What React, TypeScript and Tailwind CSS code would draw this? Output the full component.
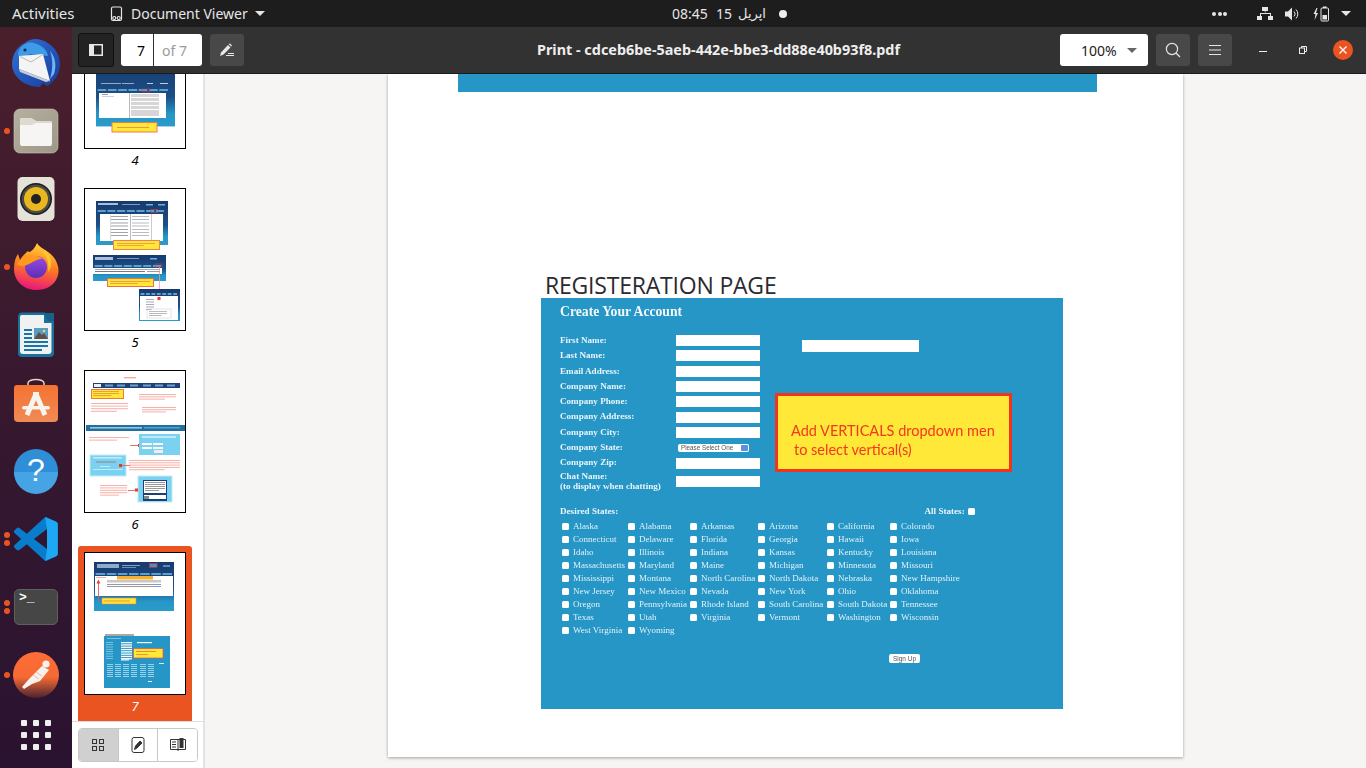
import React from "react";

const serif = "font-['Liberation_Serif',serif]";
const ui = "font-['Noto_Sans','Open_Sans',sans-serif]";

type RectT = [number, number, number, number, string];
const Rects = ({ r }: { r: RectT[] }) => (
  <>
    {r.map((a, i) => (
      <rect key={i} x={a[0]} y={a[1]} width={a[2]} height={a[3]} fill={a[4]} />
    ))}
  </>
);

const Lines = ({ x, y, w, n, gap = 2, color = "#f7b0a8", h = 1 }: { x: number; y: number; w: number; n: number; gap?: number; color?: string; h?: number }) => (
  <>
    {Array.from({ length: n }).map((_, i) => (
      <rect key={i} x={x} y={y + i * gap} width={i === n - 1 ? w * 0.7 : w} height={h} fill={color} />
    ))}
  </>
);

const Grad = ({ id }: { id: string }) => (
  <defs>
    <linearGradient id={id} x1="0" y1="0" x2="0" y2="1">
      <stop offset="0" stopColor="#173a6e" />
      <stop offset="0.55" stopColor="#1c4f86" />
      <stop offset="0.8" stopColor="#2596c6" />
      <stop offset="1" stopColor="#2a9bcb" />
    </linearGradient>
  </defs>
);

const NavStrip = ({ x, y, w }: { x: number; y: number; w: number }) => (
  <>
    {Array.from({ length: 7 }).map((_, i) => (
      <rect key={i} x={x + (i * w) / 7 + 0.6} y={y} width={w / 7 - 1.6} height={2} fill="#5f9fc8" />
    ))}
  </>
);

const svgCls = "block blur-[0.4px]";

const Thumb4 = () => (
  <svg width="102" height="143" viewBox="84 6 102 143" className={svgCls}>
    <Grad id="g4" />
    <rect x="96" y="60" width="79" height="67" fill="url(#g4)" />
    <rect x="96" y="126" width="79" height="1" fill="#9fd3ea" />
    <NavStrip x={97} y={89} w={72} />
    <rect x="101" y="83" width="20" height="1" fill="#9ab" />
    <rect x="122" y="83" width="12" height="1" fill="#9ab" />
    <rect x="147" y="83" width="6" height="1" fill="#b5d0e5" />
    <rect x="160" y="83" width="8" height="1" fill="#b5d0e5" />
    <rect x="99" y="93" width="67" height="25" fill="#ffffff" />
    <Rects r={[[102, 94, 6, 1, "#999"], [102, 96, 12, 1, "#c5d2e8"], [131, 94, 28, 22, "#d6d6d6"], [131, 97, 28, 1, "#fff"], [131, 101, 28, 1, "#fff"], [131, 105, 28, 1, "#fff"], [131, 109, 28, 1, "#fff"], [129, 93, 1, 25, "#bbb"]]} />
    <rect x="142" y="89" width="8" height="3" fill="none" stroke="#c83a3a" strokeWidth="0.6" />
    <rect x="112" y="122.5" width="45" height="9.5" fill="#ffe838" stroke="#f07a50" strokeWidth="1" />
    <rect x="117" y="127" width="32" height="1" fill="#e89a40" />
  </svg>
);

const Thumb5 = () => (
  <svg width="102" height="143" viewBox="84 188 102 143" className={svgCls}>
    <Grad id="g5" />
    <rect x="96" y="201" width="72" height="44" fill="url(#g5)" />
    <Rects r={[[98, 203, 20, 2, "#a9c0da"], [122, 204, 18, 1, "#7f9cc0"], [146, 204, 7, 1.5, "#6fb0da"], [158, 204, 7, 1.5, "#6fb0da"]]} />
    <NavStrip x={97} y={210} w={68} />
    <rect x="100" y="214" width="63" height="27" fill="#fff" />
    <Rects r={[[110, 215, 1, 25, "#ddd"], [130, 214, 1, 26, "#bbb"], [151, 214, 1, 26, "#ccc"]]} />
    {[216, 219, 222.5, 225.5, 229, 232, 235].map((y) => (
      <g key={y}>
        <rect x="111" y={y} width="17" height="1" fill="#a0a4ac" />
        <rect x="132" y={y} width="17" height="1" fill="#b8bcc2" />
      </g>
    ))}
    <rect x="151" y="209.5" width="7" height="3" fill="none" stroke="#d43a3a" strokeWidth="0.6" />
    <rect x="113.5" y="240.5" width="46" height="9" fill="#ffe838" stroke="#f08050" strokeWidth="1" />
    <Lines x={117} y={243} w={38} n={2} color="#f0a040" />
    <rect x="93" y="255" width="73" height="26" fill="url(#g5)" />
    <Rects r={[[95, 257, 18, 3, "#a9c0da"], [117, 258, 22, 1, "#7f9cc0"], [150, 258, 7, 1.5, "#6fb0da"]]} />
    <NavStrip x={94} y={265} w={68} />
    <rect x="93" y="268" width="69" height="6" fill="#fff" />
    <Rects r={[[95, 269, 65, 1, "#aab"], [95, 271, 50, 1, "#777"], [147, 271, 13, 1, "#99a"]]} />
    <rect x="155" y="264" width="7" height="3" fill="none" stroke="#d43a3a" strokeWidth="0.6" />
    <rect x="107.5" y="278.5" width="46" height="8" fill="#ffe838" stroke="#f07040" strokeWidth="1" />
    <Lines x={110} y={281} w={40} n={2} color="#f0a040" />
    <rect x="159" y="267" width="0.8" height="30" fill="#f49a90" />
    <rect x="139" y="289" width="41" height="32" fill="url(#g5)" />
    <rect x="140" y="296" width="38" height="24" fill="#fff" />
    <NavStrip x={140} y={293} w={38} />
    <rect x="157.5" y="297" width="3" height="3" fill="#e33" />
    <Lines x={146} y={299} w={8} n={5} gap={2.5} color="#aab" />
    <rect x="147" y="309" width="24" height="9" fill="none" stroke="#ccc" strokeWidth="0.5" />
    <Lines x={149} y={311} w={18} n={3} color="#bbb" />
  </svg>
);

const Thumb6 = () => (
  <svg width="102" height="143" viewBox="84 370 102 143" className={svgCls}>
    <rect x="124" y="377" width="12" height="1.4" fill="#f7a9a0" />
    <rect x="93" y="383" width="87" height="5" fill="#1e4178" />
    <rect x="94" y="384" width="7" height="3" fill="#f0f0f0" />
    {[105, 117, 130, 143, 155, 167].map((x) => (
      <rect key={x} x={x} y="384.5" width="8" height="2" fill="#6ea0cc" />
    ))}
    <rect x="91.5" y="389.5" width="32" height="9" fill="#ffe838" stroke="#f07a30" strokeWidth="1" />
    <Lines x={93} y={391} w={26} n={3} color="#e8a040" />
    <Lines x={91} y={403} w={37} n={4} gap={2.6} />
    <Lines x={139} y={394} w={37} n={3} gap={2.3} />
    <Lines x={142} y={407} w={34} n={3} gap={2.2} />
    <rect x="86" y="425" width="99" height="6" fill="#1f6fa0" />
    <rect x="90" y="427" width="52" height="1.6" fill="#9cc4dc" />
    <rect x="144" y="427" width="36" height="1.5" fill="#5fa0c8" />
    <Lines x={89} y={437} w={40} n={2} gap={2.6} />
    <rect x="130" y="445" width="9" height="0.9" fill="#f0604f" />
    <rect x="138" y="444" width="2" height="3" fill="#e83a2a" />
    <rect x="139" y="434" width="41" height="21" fill="#7ad2f0" />
    <rect x="142" y="436" width="34" height="2" fill="#bfeafa" />
    <Rects r={[[142, 443, 10, 2, "#fff"], [153, 443, 10, 2, "#fff"], [142, 447, 10, 2, "#fff"], [153, 447, 10, 2, "#fff"], [154, 450, 9, 3, "#eee"]]} />
    <rect x="90" y="455" width="36" height="21" fill="#7ad2f0" stroke="#c4ecfa" strokeWidth="1" />
    <rect x="93" y="457" width="29" height="1.6" fill="#bfeafa" />
    <rect x="96" y="461" width="20" height="2" fill="#8aa8b8" />
    <rect x="100" y="466" width="10" height="1" fill="#bfeafa" />
    <rect x="93" y="469" width="30" height="1" fill="#bfeafa" />
    <rect x="121" y="465" width="10" height="0.9" fill="#f0604f" />
    <rect x="119" y="464" width="3" height="3" fill="#e83a2a" />
    <Lines x={129} y={460} w={51} n={5} gap={2.3} />
    <rect x="138" y="476" width="34" height="26" fill="#7ad2f0" stroke="#c4ecfa" strokeWidth="1" />
    <rect x="143" y="480" width="24" height="21" fill="#1c3f76" />
    <rect x="144" y="481" width="22" height="12" fill="#fff" />
    <Lines x={145} y={482} w={20} n={5} color="#999" />
    <rect x="144" y="495" width="22" height="4" fill="#fff" />
    <rect x="144" y="496" width="5" height="3" fill="#888" />
    <Lines x={100} y={485} w={27} n={5} gap={2.4} />
    <rect x="128" y="490" width="9" height="0.9" fill="#f0604f" />
    <rect x="135" y="488.5" width="3" height="3" fill="#e83a2a" />
  </svg>
);

const Thumb7 = () => (
  <svg width="102" height="143" viewBox="84 552 102 143" className={svgCls}>
    <Grad id="g7" />
    <rect x="94" y="562" width="80" height="49" fill="url(#g7)" />
    <Rects r={[[97, 564, 22, 4, "#8eabcb"], [122, 565, 18, 1, "#86a4c6"], [122, 567, 14, 1, "#6e8fb8"], [150, 564, 7, 3, "#4f8fc0"], [163, 565, 7, 2, "#4f8fc0"]]} />
    <NavStrip x={95} y={573} w={78} />
    <rect x="149.5" y="563.5" width="7.5" height="4" fill="none" stroke="#d43a3a" strokeWidth="0.7" />
    <rect x="95" y="576" width="78" height="20" fill="#fff" />
    <rect x="117" y="576" width="36" height="3.5" fill="#f6b132" />
    <Rects r={[[107, 580, 54, 3, "#c8c8c8"], [107, 584, 54, 1, "#999"], [107, 586, 54, 1, "#999"], [107, 582.5, 54, 0.5, "#fff"], [154, 584, 7, 1, "#7a9ad0"], [154, 586, 7, 1, "#7a9ad0"]]} />
    <rect x="96" y="577" width="10" height="0.8" fill="#f29a8e" />
    <rect x="98" y="583" width="0.9" height="18" fill="#f05a48" />
    <path d="M98.4 579.5 L96.5 583.5 L100.3 583.5 Z" fill="#e8392a" />
    <rect x="102" y="598" width="34" height="6" fill="#ffe838" stroke="#f08040" strokeWidth="0.6" />
    <rect x="104" y="600.5" width="26" height="1" fill="#e09a40" />
    <rect x="105" y="634" width="29" height="2" fill="#a8a8a8" />
    <rect x="104" y="636" width="66" height="52" fill="#2596c6" />
    <rect x="107" y="638" width="14" height="1" fill="#7fc0df" />
    {[642, 644.3, 646.6, 648.9, 651.2, 653.5, 655.8, 658.1].map((y) => (
      <g key={y}>
        <rect x="106" y={y} width="7" height="0.8" fill="#8fcde8" />
        <rect x="121" y={y} width="11" height="1.3" fill="#fff" />
      </g>
    ))}
    <rect x="121" y="659" width="8" height="1.6" fill="#d8e6ee" />
    <rect x="137" y="642" width="15" height="1.2" fill="#fff" />
    <rect x="133.5" y="648.5" width="29.5" height="9.5" fill="#ffe838" stroke="#e05a50" strokeWidth="0.8" />
    <rect x="136" y="651" width="20" height="1" fill="#e09040" />
    <rect x="136" y="654" width="12" height="0.9" fill="#e09040" />
    {[107, 115, 123, 131, 140, 148].map((x) => (
      <g key={x}>
        {[664, 666, 668, 670, 672, 674, 676].map((y) => (
          <rect key={y} x={x} y={y} width="6" height="0.9" fill="#a8d8ee" />
        ))}
      </g>
    ))}
    <rect x="148" y="681" width="4" height="1" fill="#fff" />
    <rect x="159" y="663" width="5" height="1" fill="#d8eef8" />
  </svg>
);

const ThumbItem = ({ n, selected, children }: { n: number; selected?: boolean; children: React.ReactNode }) => (
  <div className={`flex h-[182px] w-[114px] flex-col items-center rounded-[3px] pt-[6px] ${selected ? "bg-[#e95420]" : ""}`}>
    <div className="h-[143px] w-[102px] bg-white outline outline-1 -outline-offset-1 outline-black">{children}</div>
    <div className={`mt-[2px] text-[13px] italic leading-[18px] ${ui} ${selected ? "text-white" : "text-black"}`}>{n}</div>
  </div>
);

/* Dock icons */
const Thunderbird = () => (
  <svg width="52" height="52" viewBox="0 0 52 52">
    <defs>
      <linearGradient id="tb" x1="0" y1="0" x2="1" y2="1">
        <stop offset="0" stopColor="#2f74d8" />
        <stop offset="1" stopColor="#1a3a9c" />
      </linearGradient>
    </defs>
    <path d="M26 2 C38 3 50 13 50 27 C50 38 43 46 37 49 L33 46 L30 50 C14 50 2 39 2 27 C2 17 8 9 15 6 C18 3 22 2 26 2Z" fill="url(#tb)" />
    <path d="M8 17 C9 10 16 4 24 6 C32 8 37 13 38 19 L20 17 L10 23 Z" fill="#3f9be6" />
    <path d="M40 14 C45 20 47 28 44 37 L40 42 C43 32 43 22 40 14Z" fill="#6ab8f4" />
    <circle cx="15" cy="13" r="1.6" fill="#102a60" />
    <path d="M9 19 L33 17 L40 44 L9 32Z" fill="#f4f4f4" />
    <path d="M10 19.5 L21 25 L33 17.5" fill="none" stroke="#b8b8b8" strokeWidth="1" />
    <path d="M9 32 L40 44 L36 45 L10 35 Z" fill="#c8ccd6" />
  </svg>
);
const Files = () => (
  <svg width="46" height="46" viewBox="0 0 46 46">
    <defs>
      <linearGradient id="fl" x1="0" y1="0" x2="1" y2="1">
        <stop offset="0" stopColor="#b5b0a0" />
        <stop offset="1" stopColor="#9c9786" />
      </linearGradient>
    </defs>
    <rect x="1" y="1" width="44" height="44" rx="6" fill="url(#fl)" stroke="#c9c5b8" strokeWidth="0.6" />
    <path d="M7 12 a2 2 0 0 1 2 -2 h9 l5 3 h14 a2 2 0 0 1 2 2 v21 a2 2 0 0 1 -2 2 h-28 a2 2 0 0 1 -2 -2 Z" fill="#f6f5f3" />
    <path d="M7 12 a2 2 0 0 1 2 -2 h9 l5 3 h14 a2 2 0 0 1 2 2 v0 h-16 l-4 2 h-12 Z" fill="#dedad0" />
  </svg>
);
const Rhythmbox = () => (
  <svg width="46" height="46" viewBox="0 0 46 46">
    <rect x="4.5" y="1" width="37" height="44" rx="5" fill="#e5e2d8" />
    <circle cx="23" cy="23" r="16" fill="#1c1c1c" />
    <circle cx="23" cy="23" r="14.5" fill="#4a4a48" />
    <circle cx="23" cy="23" r="12" fill="#e8b81e" />
    <circle cx="23" cy="23" r="5" fill="#222" />
  </svg>
);
const Firefox = () => (
  <svg width="48" height="50" viewBox="0 0 48 50">
    <defs>
      <linearGradient id="ff" x1="0.6" y1="0" x2="0.4" y2="1">
        <stop offset="0" stopColor="#ffd43a" />
        <stop offset="0.5" stopColor="#ff7a20" />
        <stop offset="1" stopColor="#e8147e" />
      </linearGradient>
      <linearGradient id="ffp" x1="0" y1="0" x2="0" y2="1">
        <stop offset="0" stopColor="#9a4be0" />
        <stop offset="1" stopColor="#5b2fb8" />
      </linearGradient>
    </defs>
    <path d="M25 1 C28 7 37 8 43 17 C47 24 48 31 44 38 C40 45 32 48 24 48 C12 48 2 39 2 27 C2 21 3 16 6 12 L8 18 C10 14 13 12 16 9 C17 12 22 8 25 1Z" fill="url(#ff)" />
    <circle cx="24" cy="25" r="11" fill="url(#ffp)" />
    <path d="M5 22 C11 13 23 11 31 17 C27 16 23 19 19 21 C15 23 9 26 5 22Z" fill="#ff9a1e" />
    <path d="M33 8 C40 14 41 24 36 30 C37 22 36 15 30 10Z" fill="#ffc52e" />
  </svg>
);
const Writer = () => (
  <svg width="46" height="46" viewBox="0 0 46 46">
    <path d="M8 0.5 H32 L41 9 V41 a4 4 0 0 1 -4 4 H9 a4 4 0 0 1 -4 -4 V4 a4 4 0 0 1 3 -3.5Z" fill="#18729c" />
    <path d="M9 3 H31 V11 H38.5 V39 a3 3 0 0 1 -3 3 H10 a3 3 0 0 1 -3 -3 V5 a2 2 0 0 1 2 -2Z" fill="#f0f2f2" />
    <path d="M31 1 L41 1 L41 9 L35 9Z" fill="#15628a" />
    <rect x="11" y="17" width="8" height="2" fill="#1a76a8" />
    <rect x="11" y="21" width="8" height="2" fill="#1a76a8" />
    <rect x="11" y="25" width="8" height="2" fill="#1a76a8" />
    <rect x="11" y="29" width="24" height="2" fill="#1a76a8" />
    <rect x="11" y="33" width="24" height="2" fill="#1a76a8" />
    <rect x="11" y="37" width="18" height="2" fill="#1a76a8" />
    <rect x="21" y="16" width="14" height="11" fill="#5a9cc0" />
    <path d="M21 27 L26 20 L29 23 L31 21 L35 27Z" fill="#5c5248" />
    <circle cx="31" cy="19" r="1.3" fill="#f0d070" />
  </svg>
);
const Software = () => (
  <svg width="46" height="46" viewBox="0 1 46 46" className="overflow-visible">
    <defs>
      <linearGradient id="sw" x1="0" y1="0" x2="0" y2="1">
        <stop offset="0" stopColor="#f47332" />
        <stop offset="1" stopColor="#f08a55" />
      </linearGradient>
    </defs>
    <path d="M15 7 V4 a8 3.5 0 0 1 16 0 V7" fill="none" stroke="#e8d4b8" strokeWidth="1.5" />
    <path d="M4 6 H42 a3 3 0 0 1 3 3 V39 a4 4 0 0 1 -4 4 H5 a4 4 0 0 1 -4 -4 V9 a3 3 0 0 1 3 -3Z" fill="url(#sw)" />
    <path d="M23 15 L14 36 M23 15 L32 36" fill="none" stroke="#f7f4ee" strokeWidth="5" />
    <rect x="20" y="13" width="6" height="4" fill="#f7f4ee" />
    <rect x="9" y="27" width="28" height="3.5" rx="1.7" fill="#f7f4ee" />
  </svg>
);
const Help = () => (
  <svg width="46" height="46" viewBox="0 0 46 46">
    <circle cx="23" cy="23" r="22" fill="#2e8ed8" />
    <path d="M1 24 H45 A22 22 0 0 1 1 24Z" fill="#46a4e4" />
    <text x="23" y="33" textAnchor="middle" fontSize="32" fill="#fff" fontFamily="Liberation Sans, sans-serif">?</text>
  </svg>
);
const VSCode = () => (
  <svg width="44" height="44" viewBox="0 0 100 100">
    <path d="M96 10.8 L75.4 .9 a6.2 6.2 0 0 0-7.1 1.2 L29.2 38 12.1 25 a4.2 4.2 0 0 0-5.3.2 L1.4 30.2 a4.2 4.2 0 0 0 0 6.2 L16.2 50 1.4 63.6 a4.2 4.2 0 0 0 0 6.2 l5.5 5 a4.2 4.2 0 0 0 5.3.2 L29.2 62 68.3 97.8 a6.2 6.2 0 0 0 7.1 1.2 L96 89.2 a6.2 6.2 0 0 0 3.5-5.6 V16.4 a6.2 6.2 0 0 0-3.5-5.6Z M75 72.7 45.3 50 75 27.3Z" fill="#0a7ccc" fillRule="evenodd" />
    <path d="M71 0.5 L96 10.8 a6 6 0 0 1 3.5 5.6 V83.6 a6 6 0 0 1 -3.5 5.6 L71 99.5 L75 72.7 V27.3 Z" fill="#1ea7f5" />
  </svg>
);
const Terminal = () => (
  <div className="relative h-[36px] w-[44px] rounded-[5px] border border-[#5f5f5f] bg-[#464646]">
    <span className="absolute left-[4px] top-[1px] font-['Liberation_Mono',monospace] text-[13px] font-bold leading-[14px] text-white">&gt;_</span>
  </div>
);
const Postman = () => (
  <svg width="48" height="48" viewBox="0 0 48 48">
    <defs>
      <linearGradient id="pm" x1="0" y1="0" x2="0" y2="1">
        <stop offset="0" stopColor="#ff6c37" />
        <stop offset="0.55" stopColor="#f56a33" />
        <stop offset="1" stopColor="#4a2330" />
      </linearGradient>
    </defs>
    <circle cx="24" cy="24" r="23" fill="url(#pm)" />
    <circle cx="34" cy="13" r="3.6" fill="#f7f2ee" />
    <path d="M30 15 L37 19 L28 30 L20 33 L12 38 L10 36 L17 28Z" fill="#f7f2ee" />
    <path d="M24 21 L30 25 M21 24 L27 28" stroke="#f0a080" strokeWidth="0.7" />
  </svg>
);

const DockItem = ({ dots = 0, children, h = "h-[68px]" }: { dots?: number; children: React.ReactNode; h?: string }) => (
  <div className={`relative flex w-[72px] items-center justify-center ${h}`}>
    {dots > 0 && (
      <div className="absolute left-[4px] top-0 flex h-full flex-col justify-center gap-[2px]">
        {Array.from({ length: dots }).map((_, i) => (
          <span key={i} className="h-[6px] w-[6px] rounded-full bg-[#e95420]" />
        ))}
      </div>
    )}
    {children}
  </div>
);

const Dock = () => (
  <aside className="flex w-[72px] shrink-0 flex-col bg-gradient-to-b from-[#4a1f2c] via-[#37182f] to-[#2a1330] pt-[2px]">
    <DockItem><Thunderbird /></DockItem>
    <DockItem dots={1}><Files /></DockItem>
    <DockItem><Rhythmbox /></DockItem>
    <DockItem dots={1}><Firefox /></DockItem>
    <DockItem><Writer /></DockItem>
    <DockItem><Software /></DockItem>
    <DockItem><Help /></DockItem>
    <DockItem dots={2}><VSCode /></DockItem>
    <DockItem dots={2}><Terminal /></DockItem>
    <DockItem dots={1}><Postman /></DockItem>
    <div className="ml-[21px] mt-[11px] grid w-[30px] grid-cols-3 gap-[6px]">
      {Array.from({ length: 9 }).map((_, i) => (
        <span key={i} className="h-[6px] w-[6px] rounded-[1px] bg-[#eeeeee]" />
      ))}
    </div>
  </aside>
);

const TopBar = () => (
  <header className={`flex h-[27px] shrink-0 items-center bg-[#1d1d1d] text-[14px] text-[#e6e6e6] ${ui}`}>
    <div className="w-[110px] pl-[12px] text-[15px]">Activities</div>
    <svg width="13" height="16" viewBox="0 0 13 16" fill="none" stroke="#e6e6e6" strokeWidth="1.2">
      <path d="M1.5 13 V2.5 a1.5 1.5 0 0 1 1.5 -1.5 h7 a1.5 1.5 0 0 1 1.5 1.5 V13 a1.5 1.5 0 0 1 -1.5 1.5 h-7 a1.5 1.5 0 0 1 -1.5 -1.5Z" />
      <circle cx="4.3" cy="12" r="1.5" />
      <circle cx="8.7" cy="12" r="1.5" />
    </svg>
    <div className="ml-[8px] w-[124px]">Document Viewer</div>
    <span className="h-0 w-0 border-x-[5px] border-t-[5px] border-x-transparent border-t-[#e6e6e6]" />
    <div className="flex flex-1 items-center pl-[407px]">
      <span className="w-[37px] text-[#e6e6e6]">08:45</span>
      <span className="ml-[7px]">15</span>
      <span className="ml-[6px] font-['DejaVu_Sans','Noto_Sans',sans-serif] text-[13px]" dir="rtl">اپریل</span>
      <span className="ml-[13px] h-[8px] w-[8px] rounded-full bg-[#eeeeee]" />
    </div>
    <div className="flex items-center">
      <span className="flex gap-[1.5px]">
        <i className="h-[4px] w-[4px] rounded-full bg-[#e6e6e6]" />
        <i className="h-[4px] w-[4px] rounded-full bg-[#e6e6e6]" />
        <i className="h-[4px] w-[4px] rounded-full bg-[#e6e6e6]" />
      </span>
      <svg width="16" height="14" viewBox="0 0 16 14" className="ml-[30px]" fill="#e6e6e6">
        <rect x="5" y="0" width="6" height="4" />
        <rect x="0" y="9" width="5" height="4" />
        <rect x="11" y="9" width="5" height="4" />
        <path d="M7.5 4 h1 v2 h5.5 v3 h-1 v-2 h-9 v2 h-1 v-3 h5.5Z" />
      </svg>
      <svg width="15" height="14" viewBox="0 0 15 14" className="ml-[12px]" fill="none" stroke="#e6e6e6">
        <path d="M0 4.5 h3 l4 -4 v13 l-4 -4 h-3Z" fill="#e6e6e6" stroke="none" />
        <path d="M9 4.5 a3.5 3.5 0 0 1 0 5" strokeWidth="1" />
        <path d="M11 2.5 a6.5 6.5 0 0 1 0 9" strokeWidth="1" />
      </svg>
      <svg width="16" height="16" viewBox="0 0 16 16" className="ml-[13px]" fill="none">
        <path d="M3.5 2 L0.5 8 H2.5 L1.5 14 L5 7 H3 L4.5 2Z" fill="#e6e6e6" />
        <rect x="8" y="2" width="7.5" height="13" rx="1" stroke="#e6e6e6" />
        <rect x="10" y="0.5" width="3.5" height="1.5" fill="#e6e6e6" />
        <rect x="9.5" y="9" width="4.5" height="4.5" fill="#e6e6e6" />
      </svg>
      <span className="ml-[12px] mr-[15px] h-0 w-0 border-x-[5px] border-t-[5px] border-x-transparent border-t-[#e6e6e6]" />
    </div>
  </header>
);

const HdrBtn = ({ children, w = "w-[34px]" }: { children: React.ReactNode; w?: string }) => (
  <div className={`flex h-[32px] items-center justify-center rounded-[3px] bg-[#484848] ${w}`}>{children}</div>
);

const Toolbar = () => (
  <div className={`flex h-[47px] shrink-0 items-center border-b border-[#1c1c1c] bg-[#333232] pl-[6px] ${ui}`}>
    <div className="flex h-[34px] w-[36px] items-center justify-center rounded-[3px] border border-[#111] bg-[#232323]">
      <svg width="14" height="12" viewBox="0 0 14 12">
        <path d="M0 0 H14 V12 H0Z M5 1.5 V10.5 H12.5 V1.5Z" fill="#e8e8e8" fillRule="evenodd" />
      </svg>
    </div>
    <div className="ml-[7px] flex h-[32px] w-[81px] items-stretch rounded-[3px] bg-white text-[14px]">
      <div className="flex w-[33px] items-center justify-end border-r border-[#333] pr-[8px] text-black">7</div>
      <div className="flex flex-1 items-center pl-[8px] text-[#9a9a9a]">of 7</div>
    </div>
    <div className="ml-[8px]">
      <HdrBtn>
        <svg width="16" height="14" viewBox="0 0 16 14" fill="#e8e8e8">
          <path d="M1 13 L2 9.5 L9 2 L11.5 4.5 L4.5 11.5Z" />
          <path d="M9.8 1.3 L10.8 0.3 L13 2.5 L12.2 3.6Z" />
          <rect x="7" y="12" width="8" height="1" />
          <rect x="9" y="10" width="6" height="1" />
        </svg>
      </HdrBtn>
    </div>
    <div className="ml-[293px] w-[363px] whitespace-nowrap text-center text-[14.4px] font-bold text-[#eeeeee]">Print - cdceb6be-5aeb-442e-bbe3-dd88e40b93f8.pdf</div>
    <div className="ml-[160px] flex h-[32px] w-[88px] items-center rounded-[3px] bg-white pl-[21px] text-[14px] text-[#222]">
      100%
      <span className="ml-[10px] h-0 w-0 border-x-[5px] border-t-[5px] border-x-transparent border-t-[#666]" />
    </div>
    <div className="ml-[8px]">
      <HdrBtn>
        <svg width="16" height="16" viewBox="0 0 16 16" fill="none" stroke="#e4e4e4" strokeWidth="1.2">
          <circle cx="7" cy="7" r="5.6" />
          <path d="M11 11 L15 15" />
        </svg>
      </HdrBtn>
    </div>
    <div className="ml-[8px]">
      <HdrBtn>
        <svg width="12" height="10" viewBox="0 0 12 10" fill="#e4e4e4">
          <rect width="12" height="1" />
          <rect y="4.5" width="12" height="1" />
          <rect y="9" width="12" height="1" />
        </svg>
      </HdrBtn>
    </div>
    <span className="ml-[27px] mt-[3px] h-px w-[8px] bg-[#eeeeee]" />
    <svg width="8" height="8" viewBox="0 0 8 8" className="ml-[32px]" fill="none" stroke="#eeeeee">
      <rect x="0.5" y="2" width="5" height="5.5" />
      <path d="M2.5 2 V0.5 H7.5 V5.5 H5.5" />
    </svg>
    <div className="ml-[26px] flex h-[20px] w-[20px] items-center justify-center rounded-full bg-[#e95420]">
      <svg width="8" height="8" viewBox="0 0 8 8" stroke="#fff" strokeWidth="1.3">
        <path d="M0.5 0.5 L7.5 7.5 M7.5 0.5 L0.5 7.5" />
      </svg>
    </div>
  </div>
);

const Sidebar = () => (
  <aside className="flex w-[133px] shrink-0 flex-col border-r-2 border-[#e2e2e0] bg-white">
    <div className="min-h-0 flex-1 overflow-hidden pl-[6px]">
      <div className="mt-[-74px]">
        <ThumbItem n={4}><Thumb4 /></ThumbItem>
        <ThumbItem n={5}><Thumb5 /></ThumbItem>
        <ThumbItem n={6}><Thumb6 /></ThumbItem>
        <ThumbItem n={7} selected><Thumb7 /></ThumbItem>
      </div>
    </div>
    <div className="flex h-[47px] shrink-0 items-start border-t border-[#dedede] pl-[6px] pt-[6px]">
      <div className="flex h-[34px] w-[120px] overflow-hidden rounded-[4px] border border-[#c8c8c8]">
        <div className="flex flex-1 items-center justify-center bg-[#d0d0d0]">
          <svg width="14" height="14" viewBox="0 0 14 14" fill="none" stroke="#333" strokeWidth="1">
            <rect x="1.5" y="1.5" width="4" height="4" />
            <rect x="8.5" y="1.5" width="4" height="4" />
            <rect x="1.5" y="8.5" width="4" height="4" />
            <rect x="8.5" y="8.5" width="4" height="4" />
          </svg>
        </div>
        <div className="flex flex-1 items-center justify-center border-x border-[#c8c8c8] bg-white">
          <svg width="14" height="16" viewBox="0 0 14 16" fill="none" stroke="#333" strokeWidth="1">
            <rect x="1" y="0.5" width="12" height="15" rx="2" />
            <path d="M3.5 12.5 L4.5 9 L9 4 L11 6 L6 11Z" fill="#333" />
          </svg>
        </div>
        <div className="flex flex-1 items-center justify-center bg-white">
          <svg width="16" height="14" viewBox="0 0 16 14" fill="none" stroke="#333" strokeWidth="1">
            <path d="M0.5 1.5 H15.5 V11.5 H8 H0.5Z" />
            <path d="M8 1.5 V13" />
            <rect x="10" y="0.5" width="3" height="9" fill="#333" />
            <path d="M2 4 H6 M2 6.5 H6 M2 9 H6" />
          </svg>
        </div>
      </div>
    </div>
  </aside>
);

const labels = ["First Name:", "Last Name:", "Email Address:", "Company Name:", "Company Phone:", "Company Address:", "Company City:", "Company State:", "Company Zip:"];

const states = [
  ["Alaska", "Alabama", "Arkansas", "Arizona", "California", "Colorado"],
  ["Connecticut", "Delaware", "Florida", "Georgia", "Hawaii", "Iowa"],
  ["Idaho", "Illinois", "Indiana", "Kansas", "Kentucky", "Louisiana"],
  ["Massachusetts", "Maryland", "Maine", "Michigan", "Minnesota", "Missouri"],
  ["Mississippi", "Montana", "North Carolina", "North Dakota", "Nebraska", "New Hampshire"],
  ["New Jersey", "New Mexico", "Nevada", "New York", "Ohio", "Oklahoma"],
  ["Oregon", "Pennsylvania", "Rhode Island", "South Carolina", "South Dakota", "Tennessee"],
  ["Texas", "Utah", "Virginia", "Vermont", "Washington", "Wisconsin"],
  ["West Virginia", "Wyoming"],
];

const Box = () => <span className="h-[7px] w-[7px] shrink-0 rounded-[1.5px] bg-white" />;

const RegistrationForm = () => (
  <div className={`ml-[153px] h-[411px] w-[522px] bg-[#2596c6] text-white ${serif}`}>
    <div className="blur-[0.25px]">
      <div className="pl-[19px] pt-[5px] text-[13.7px] font-bold leading-[17px] text-[#f2f8fb]">Create Your Account</div>
      <div className="flex">
        <div className="ml-[19px] mt-[13px] w-[215px]">
          {labels.map((l, i) => (
            <div key={l} className="flex h-[15.33px] items-center text-[9.1px] font-bold text-[#eaf5fa]">
              <span className="w-[116px]">{l}</span>
              {i === 7 ? (
                <span className="ml-[2px] flex h-[8px] w-[71px] items-center justify-between rounded-[2px] bg-white pl-[3px] pr-[1px] font-['Liberation_Sans',sans-serif] text-[6.3px] font-normal text-[#555]">
                  Please Select One
                  <span className="h-[6px] w-[7px] rounded-[1px] bg-[#5a8ee0]" />
                </span>
              ) : (
                <span className="h-[11px] w-[84px] bg-white" />
              )}
            </div>
          ))}
          <div className="flex items-center text-[9.1px] font-bold leading-[10px] text-[#eaf5fa]">
            <span className="w-[116px]">
              Chat Name:
              <br />
              (to display when chatting)
            </span>
            <span className="mt-[1px] h-[11px] w-[84px] bg-white" />
          </div>
        </div>
        <div className="flex-1">
          <div className="ml-[27px] mt-[20px] h-[12px] w-[117px] bg-white" />
          <div className="mt-[41px] h-[79px] w-[237px] border-[3px] border-[#f0341e] bg-[#ffe838] pl-[13px] pt-[25px] font-['Lato','Open_Sans',sans-serif] text-[14.5px] leading-[19px] text-[#f5361f]">
            <div className="whitespace-nowrap">Add VERTICALS dropdown men</div>
            <div className="pl-[3px]">to select vertical(s)</div>
          </div>
        </div>
      </div>
      <div className="mt-[14px] flex h-[13px] items-center pl-[19px] text-[9.1px] font-bold text-[#eaf5fa]">
        <span className="w-[364.5px]">Desired States:</span>
        <span className="w-[43px]">All States:</span>
        <Box />
      </div>
      <div className="mt-[2px] pl-[21px]">
        {states.map((row) => (
          <div key={row[0]} className="grid h-[13px] grid-cols-[66px_62px_68px_69px_63px_100px] items-center text-[9px] text-[#e2f1f8]">
            {row.map((s) => (
              <div key={s} className="flex items-center gap-[4px] whitespace-nowrap">
                <Box />
                {s}
              </div>
            ))}
          </div>
        ))}
      </div>
      <div className="ml-[348px] mt-[17px] flex h-[9px] w-[31px] items-center justify-center rounded-[2px] bg-white font-['Liberation_Sans',sans-serif] text-[6.5px] text-[#555]">Sign Up</div>
    </div>
  </div>
);

const Viewer = () => (
  <main className="min-w-0 flex-1 overflow-hidden bg-[#f6f5f4]">
    <div className="mx-auto h-[683px] w-[795px] bg-white shadow-[0_1px_3px_rgba(0,0,0,0.35)]">
      <div className="ml-[70px] h-[18px] w-[639px] bg-[#2596c6]" />
      <div className="ml-[157px] mt-[179px] h-[27px] whitespace-nowrap font-['Open_Sans',sans-serif] text-[23px] leading-[28px] tracking-[-0.2px] text-[#2a2a30]">REGISTERATION PAGE</div>
      <RegistrationForm />
    </div>
  </main>
);

export default function App() {
  return (
    <div className="flex h-[768px] w-[1366px] flex-col overflow-hidden">
      <TopBar />
      <div className="flex min-h-0 flex-1">
        <Dock />
        <div className="flex min-w-0 flex-1 flex-col">
          <Toolbar />
          <div className="flex min-h-0 flex-1">
            <Sidebar />
            <Viewer />
          </div>
        </div>
      </div>
    </div>
  );
}
